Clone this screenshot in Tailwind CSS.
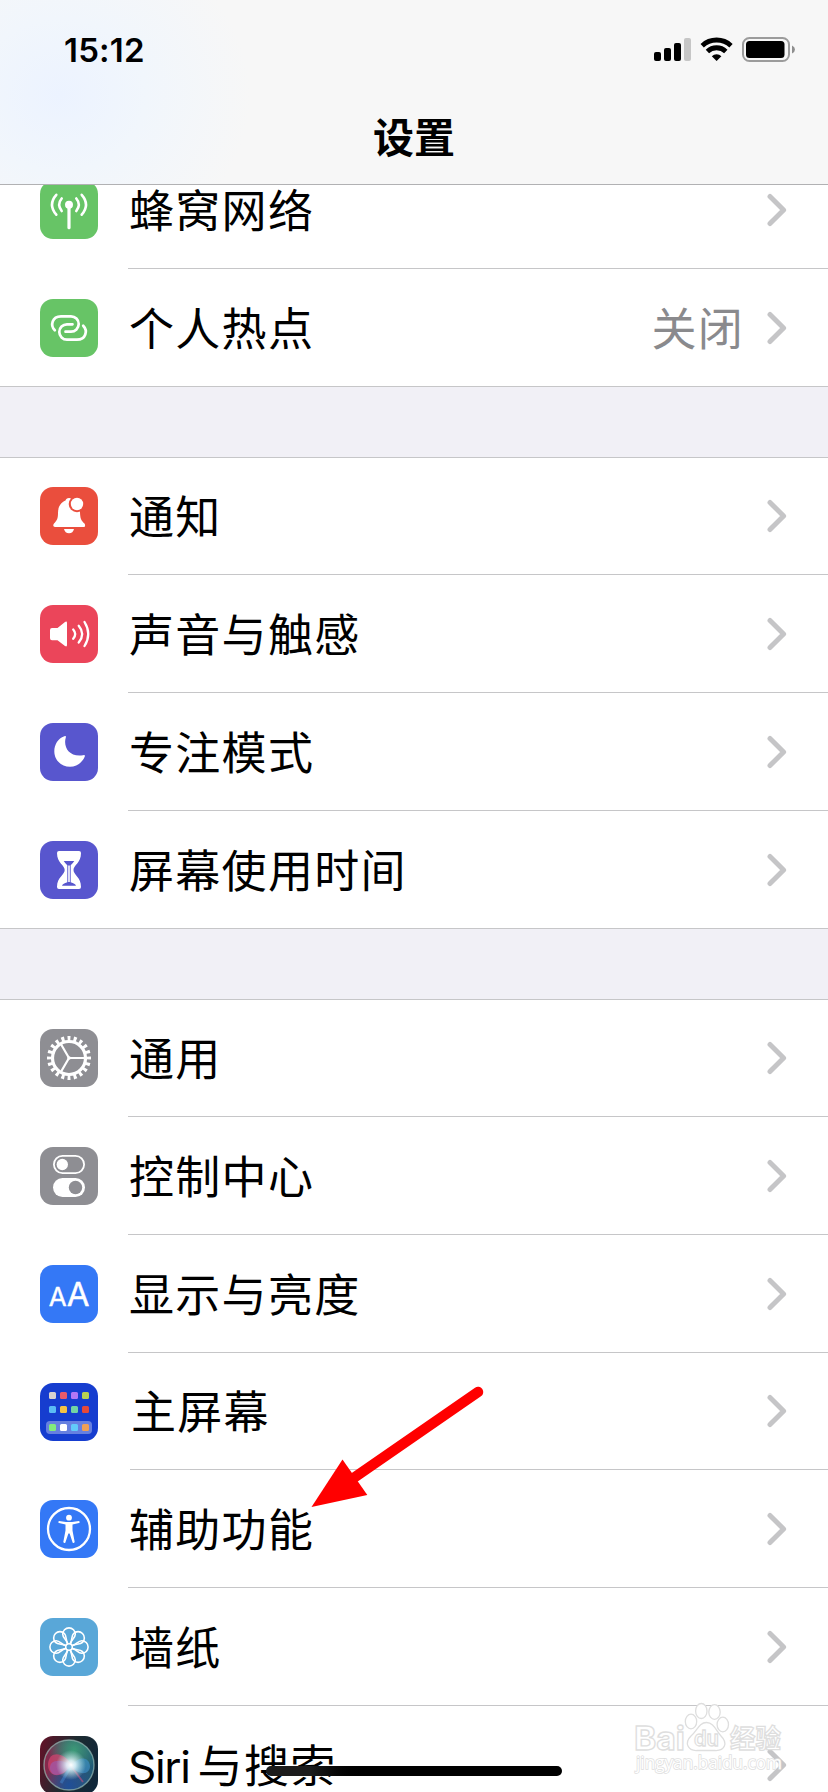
<!DOCTYPE html>
<html lang="zh-CN">
  <head>
    <meta charset="UTF-8" />
    <meta name="viewport" content="width=device-width, initial-scale=1.0" />
    <title>设置</title>
    <script src="https://cdn.jsdelivr.net/npm/@tailwindcss/browser@4"></script>
  </head>
<body class="bg-white">
  <svg class="hidden">
    <symbol id="chevron" viewBox="0 0 20 34">
      <path d="M3 3.5 L16.6 17 L3 30.5" fill="none" stroke="#c5c5c7" stroke-width="5" stroke-linecap="round" stroke-linejoin="round" />
    </symbol>
  </svg>

  <div class="relative w-[828px] h-[1792px] overflow-hidden bg-white text-black font-['Inter','Noto_Sans_CJK_SC',sans-serif]">

    <!-- header -->
    <header class="relative z-10 h-[185px] border-b border-[#b1b1b3] bg-[#f7f7f7] bg-[radial-gradient(ellipse_190px_170px_at_60px_95px,#ecf3ff_0%,#f1f6fc_45%,#f7f7f7_100%)]">
      <div class="flex justify-between items-center h-[100px] pl-[64px] pr-[32px]">
        <span class="pt-[1px] text-[33px] leading-none font-semibold tracking-[0.2px]">15:12</span>
        <svg class="w-[144px] h-[30px]" viewBox="651 35 144 30">
          <rect x="653" y="52" width="7" height="9" rx="2" />
          <rect x="663" y="48" width="7" height="13" rx="2" />
          <rect x="673" y="43" width="7" height="18" rx="2" />
          <rect x="683" y="38" width="7" height="23" rx="2" fill="#c6c6c6" />
          <g fill="none" stroke="#000" stroke-width="4.8">
            <path d="M701.2 45.7 A21 21 0 0 1 730 45.7" />
            <path d="M706.4 51.5 A13.2 13.2 0 0 1 724.8 51.5" />
          </g>
          <path d="M715.6 61 L710.8 56.2 A6.8 6.8 0 0 1 720.4 56.2 Z" />
          <rect x="742" y="38" width="46" height="23" rx="6.5" fill="none" stroke="#9c9c9c" stroke-width="2" />
          <rect x="745" y="41" width="38.500" height="17" rx="3.500" />
          <path d="M791 45.500 Q794 47 794 49.500 Q794 52 791 53.500 Z" fill="#8e8e8e" />
        </svg>
      </div>
      <h1 class="pt-[18px] text-center text-[41px] leading-[40px] font-bold">设置</h1>
    </header>

    <!-- settings list, scrolled under the header -->
    <main class="-mt-[34px] text-[45px] tracking-[1.3px]">
      <section class="border-b border-[#c6c6c8]">
        <div class="flex h-[118px] pt-[30px] pl-[40px]">
          <svg class="size-[58px] rounded-[13px] bg-[#67c466]" viewBox="0 0 58 58" fill="none" stroke="#fff" stroke-width="2.6" stroke-linecap="round">
            <circle cx="29" cy="23.700" r="4" fill="#fff" stroke="none" />
            <path d="M29 24 V46.700" stroke-width="3.200" />
            <path d="M21.700 17.500 Q16.700 23.500 21.700 30 M36.300 17.500 Q41.300 23.500 36.300 30 M16.300 13.800 Q7.700 23.500 16.300 33.700 M41.700 13.800 Q50.300 23.500 41.700 33.700" />
          </svg>
          <div class="flex flex-1 ml-[30px] -mt-[30px] pt-[30px] pr-[41px] border-b border-[#c6c6c8]">
            <span class="flex-1 pl-px leading-[62px]">蜂窝网络</span>
            <svg class="w-[20px] h-[34px] mt-[12px]"><use href="#chevron" /></svg>
          </div>
        </div>
        <div class="flex h-[117px] pt-[30px] pl-[40px]">
          <svg class="size-[58px] rounded-[13px] bg-[#67c466]" viewBox="0 0 58 58" fill="none" stroke="#fff" stroke-width="2.700" stroke-linecap="round">
            <path d="M14.800 31.300 C10 26.500 12 17.300 21 17.300 H31 A7.700 7.700 0 0 1 31 32.700 H25.500" />
            <path d="M43.200 26.700 C48 31.500 46 40.700 37 40.700 H27 A7.700 7.700 0 0 1 27 25.300 H32.500" />
          </svg>
          <div class="flex flex-1 ml-[30px] pr-[41px]">
            <span class="flex-1 pl-px leading-[62px]">个人热点</span>
            <span class="leading-[62px] mr-[23px] text-[#8a8a8d]">关闭</span>
            <svg class="w-[20px] h-[34px] mt-[12px]"><use href="#chevron" /></svg>
          </div>
        </div>
      </section>

      <div class="h-[70px] bg-[#f1f0f6]"></div>

      <section class="border-y border-[#c6c6c8]">
        <div class="flex h-[117px] pt-[29px] pl-[40px]">
          <svg class="size-[58px] rounded-[13px] bg-[#ea4e3d]" viewBox="0 0 58 58" fill="#fff">
            <path d="M29 11 C27 11 26 12 25.500 13.500 C20 16 18 20.500 18 26 C18 31.500 17 33.500 14 36.500 C12.500 38.500 13.500 40 15 40 H43.500 C45 40 45.700 38.500 44.500 36.500 C41 33.500 40.200 31.500 40 25 C40 18 34 11 29 11 Z" />
            <circle cx="37" cy="17" r="8.300" fill="#ea4e3d" />
            <circle cx="37" cy="17" r="6.200" />
            <path d="M24 42 H34 Q33 46.200 29 46.200 Q25 46.200 24 42 Z" />
          </svg>
          <div class="flex flex-1 ml-[30px] -mt-[29px] pt-[29px] pr-[41px] border-b border-[#c6c6c8]">
            <span class="flex-1 pl-px leading-[62px]">通知</span>
            <svg class="w-[20px] h-[34px] mt-[12px]"><use href="#chevron" /></svg>
          </div>
        </div>
        <div class="flex h-[118px] pt-[30px] pl-[40px]">
          <svg class="size-[58px] rounded-[13px] bg-[#eb455a]" viewBox="0 0 58 58" fill="none" stroke="#fff" stroke-width="2.300" stroke-linecap="round">
            <path d="M12 23 H17.500 L25 17 Q27 15.800 27 18 V40 Q27 42.200 25 41 L17.500 35.200 H12 Q10 35.200 10 33.200 V25 Q10 23 12 23 Z" fill="#fff" stroke="none" />
            <path d="M33.200 24.500 Q37.200 29 33.200 33.800 M38.700 20.800 Q45.700 29 38.700 37.500 M44.500 17 Q52 29 44.500 41" />
          </svg>
          <div class="flex flex-1 ml-[30px] -mt-[30px] pt-[30px] pr-[41px] border-b border-[#c6c6c8]">
            <span class="flex-1 pl-px leading-[62px]">声音与触感</span>
            <svg class="w-[20px] h-[34px] mt-[12px]"><use href="#chevron" /></svg>
          </div>
        </div>
        <div class="flex h-[118px] pt-[30px] pl-[40px]">
          <svg class="size-[58px] rounded-[13px] bg-[#5856ce]" viewBox="0 0 58 58" fill="#fff">
            <path d="M24.300 13.200 Q26.500 12.500 25.800 14.500 C23 24 29 34.500 43 32.300 Q45.500 31.500 44.700 33.800 C42 40 36.500 43.700 30 43.700 C21 43.700 14.300 37 14.300 28.300 C14.300 21.500 18 15.500 24.300 13.200 Z" />
          </svg>
          <div class="flex flex-1 ml-[30px] -mt-[30px] pt-[30px] pr-[41px] border-b border-[#c6c6c8]">
            <span class="flex-1 pl-px leading-[62px]">专注模式</span>
            <svg class="w-[20px] h-[34px] mt-[12px]"><use href="#chevron" /></svg>
          </div>
        </div>
        <div class="flex h-[117px] pt-[30px] pl-[40px]">
          <svg class="size-[58px] rounded-[13px] bg-[#5856ce]" viewBox="0 0 58 58">
            <path d="M19 10 H39 Q41 10 41 12 C41 22 33.500 24 33.500 29 C33.500 34 41 36 41 46 Q41 48 39 48 H19 Q17 48 17 46 C17 36 24.700 34 24.700 29 C24.700 24 17 22 17 12 Q17 10 19 10 Z" fill="#fff" />
            <path d="M23.700 20 H34.300 Q32.500 22.700 30.700 24.300 V41.300 Q35 42.500 36 44.700 H22 Q23 42.500 27.300 41.300 V24.300 Q25.500 22.700 23.700 20 Z" fill="#5856ce" />
            <path d="M29 24.500 V41" stroke="#fff" stroke-width="1.600" />
          </svg>
          <div class="flex flex-1 ml-[30px] pr-[41px]">
            <span class="flex-1 pl-px leading-[62px]">屏幕使用时间</span>
            <svg class="w-[20px] h-[34px] mt-[12px]"><use href="#chevron" /></svg>
          </div>
        </div>
      </section>

      <div class="h-[70px] bg-[#f1f0f6]"></div>

      <section class="border-t border-[#c6c6c8]">
        <div class="flex h-[117px] pt-[29px] pl-[40px]">
          <svg class="size-[58px] rounded-[13px] bg-[#8e8e93]" viewBox="0 0 58 58" fill="none" stroke="#fff">
            <circle cx="29" cy="29" r="19.500" stroke-width="5" pathLength="40" stroke-dasharray="0.950 1.050" stroke-dashoffset="0.475" />
            <circle cx="29" cy="29" r="16.500" stroke-width="3.200" />
            <path d="M29 29 H45 M29 29 L21 15.200 M29 29 L21 42.800" stroke-width="2.200" />
            <circle cx="29" cy="29" r="1.800" fill="#fff" stroke="none" />
          </svg>
          <div class="flex flex-1 ml-[30px] -mt-[29px] pt-[29px] pr-[41px] border-b border-[#c6c6c8]">
            <span class="flex-1 pl-px leading-[62px]">通用</span>
            <svg class="w-[20px] h-[34px] mt-[12px]"><use href="#chevron" /></svg>
          </div>
        </div>
        <div class="flex h-[118px] pt-[30px] pl-[40px]">
          <svg class="size-[58px] rounded-[13px] bg-[#8e8e93]" viewBox="0 0 58 58" fill="#fff">
            <rect x="13.900" y="8.900" width="30.200" height="17.200" rx="8.600" fill="none" stroke="#fff" stroke-width="1.800" />
            <circle cx="22.300" cy="17.500" r="5.700" />
            <rect x="13" y="31" width="32" height="19" rx="9.500" />
            <circle cx="35.500" cy="40.500" r="6.700" fill="#8e8e93" />
          </svg>
          <div class="flex flex-1 ml-[30px] -mt-[30px] pt-[30px] pr-[41px] border-b border-[#c6c6c8]">
            <span class="flex-1 pl-px leading-[62px]">控制中心</span>
            <svg class="w-[20px] h-[34px] mt-[12px]"><use href="#chevron" /></svg>
          </div>
        </div>
        <div class="flex h-[118px] pt-[30px] pl-[40px]">
          <svg class="size-[58px] rounded-[13px] bg-[#3478f6] tracking-normal" viewBox="0 0 58 58" fill="#fff" stroke="#fff" stroke-width="0.400" stroke-linejoin="round" text-anchor="middle">
            <text x="17.700" y="41" font-size="26">A</text>
            <text x="38.200" y="41" font-size="33">A</text>
          </svg>
          <div class="flex flex-1 ml-[30px] -mt-[30px] pt-[30px] pr-[41px] border-b border-[#c6c6c8]">
            <span class="flex-1 pl-px leading-[62px]">显示与亮度</span>
            <svg class="w-[20px] h-[34px] mt-[12px]"><use href="#chevron" /></svg>
          </div>
        </div>
        <div class="flex h-[117px] pt-[30px] pl-[40px]">
          <svg class="size-[58px] rounded-[13px] bg-[#163dcf]" viewBox="0 0 58 58">
            <rect x="6" y="38" width="46" height="13" rx="4" fill="#fff" fill-opacity="0.350" />
            <rect x="9" y="9" width="7" height="7" rx="1.500" fill="#d9d4cf" />
            <rect x="20" y="9" width="7" height="7" rx="1.500" fill="#ea5b6b" />
            <rect x="31" y="9" width="7" height="7" rx="1.500" fill="#b277f5" />
            <rect x="42" y="9" width="7" height="7" rx="1.500" fill="#b9d151" />
            <rect x="9" y="23" width="7" height="7" rx="1.500" fill="#5bbcf5" />
            <rect x="20" y="23" width="7" height="7" rx="1.500" fill="#f5c344" />
            <rect x="31" y="23" width="7" height="7" rx="1.500" fill="#72d5a3" />
            <rect x="42" y="23" width="7" height="7" rx="1.500" fill="#e6493a" />
            <rect x="9" y="41" width="7" height="7" rx="1.500" fill="#83ec7d" />
            <rect x="20" y="41" width="7" height="7" rx="1.500" fill="#fff" />
            <rect x="31" y="41" width="7" height="7" rx="1.500" fill="#62cbfa" />
            <rect x="42" y="41" width="7" height="7" rx="1.500" fill="#f0a055" />
          </svg>
          <div class="flex flex-1 ml-[32px] -mt-[30px] pt-[30px] pr-[41px] border-b border-[#c6c6c8]">
            <span class="flex-1 pl-px leading-[60px]">主屏幕</span>
            <svg class="w-[20px] h-[34px] mt-[11px]"><use href="#chevron" /></svg>
          </div>
        </div>
        <div class="flex h-[118px] pt-[30px] pl-[40px]">
          <svg class="size-[58px] rounded-[13px] bg-[#3478f6]" viewBox="0 0 58 58" fill="#fff">
            <circle cx="29" cy="29" r="21" fill="none" stroke="#fff" stroke-width="2.300" />
            <circle cx="29" cy="17.700" r="2.900" />
            <path d="M19 21 L26 22 H32 L39 21 Q40.300 22.200 39 23.100 L32.500 24.500 V30.500 L34.700 42 Q34 43.300 32.700 42.700 L29.600 33.500 H28.400 L25.300 42.700 Q24 43.300 23.300 42 L25.500 30.500 V24.500 L19 23.100 Q17.700 22.200 19 21 Z" />
          </svg>
          <div class="flex flex-1 ml-[30px] -mt-[30px] pt-[30px] pr-[41px] border-b border-[#c6c6c8]">
            <span class="flex-1 pl-px leading-[62px]">辅助功能</span>
            <svg class="w-[20px] h-[34px] mt-[12px]"><use href="#chevron" /></svg>
          </div>
        </div>
        <div class="flex h-[118px] pt-[30px] pl-[40px]">
          <svg class="size-[58px] rounded-[13px] bg-[#59a7d8]" viewBox="0 0 58 58" fill="none" stroke="#fff" stroke-width="1.600">
            <defs>
              <path id="petal" d="M27.800 26 C27 22 22.700 20 22.700 16.200 A6.300 6.300 0 0 1 35.300 16.200 C35.300 20 31 22 30.200 26" />
            </defs>
            <use href="#petal" />
            <use href="#petal" transform="rotate(45 29 29)" />
            <use href="#petal" transform="rotate(90 29 29)" />
            <use href="#petal" transform="rotate(135 29 29)" />
            <use href="#petal" transform="rotate(180 29 29)" />
            <use href="#petal" transform="rotate(225 29 29)" />
            <use href="#petal" transform="rotate(270 29 29)" />
            <use href="#petal" transform="rotate(315 29 29)" />
            <circle cx="29" cy="29" r="3.300" />
          </svg>
          <div class="flex flex-1 ml-[30px] -mt-[30px] pt-[30px] pr-[41px] border-b border-[#c6c6c8]">
            <span class="flex-1 pl-px leading-[62px]">墙纸</span>
            <svg class="w-[20px] h-[34px] mt-[12px]"><use href="#chevron" /></svg>
          </div>
        </div>
        <div class="flex h-[118px] pt-[30px] pl-[40px]">
          <svg class="size-[58px] rounded-[13px]" viewBox="0 0 58 58">
            <defs>
              <linearGradient id="siriBg" x1="0" y1="0.300" x2="1" y2="0.600">
                <stop offset="0" stop-color="#5c1428" />
                <stop offset="0.500" stop-color="#1d2b30" />
                <stop offset="1" stop-color="#10273a" />
              </linearGradient>
              <linearGradient id="siriOrb" x1="0" y1="0.500" x2="1" y2="0.500">
                <stop offset="0" stop-color="#8e2448" />
                <stop offset="0.480" stop-color="#3f5266" />
                <stop offset="1" stop-color="#1d5a78" />
              </linearGradient>
              <radialGradient id="siriGreen" cx="0.600" cy="0.200" r="0.500">
                <stop offset="0" stop-color="#3c9a78" />
                <stop offset="1" stop-color="#3c9a78" stop-opacity="0" />
              </radialGradient>
              <radialGradient id="siriBlue" cx="0.500" cy="0.900" r="0.500">
                <stop offset="0" stop-color="#1f4f98" />
                <stop offset="1" stop-color="#1f4f98" stop-opacity="0" />
              </radialGradient>
              <radialGradient id="siriGlow">
                <stop offset="0" stop-color="#fff" />
                <stop offset="0.300" stop-color="#e8fbff" stop-opacity="0.850" />
                <stop offset="1" stop-color="#bfeee8" stop-opacity="0" />
              </radialGradient>
            </defs>
            <rect width="58" height="58" fill="url(#siriBg)" />
            <circle cx="29" cy="29" r="25" fill="url(#siriOrb)" />
            <circle cx="29" cy="29" r="25" fill="url(#siriGreen)" />
            <circle cx="29" cy="29" r="25" fill="url(#siriBlue)" />
            <path d="M31 28 C24 16 9 14 8 28 C8 43 24 43 31 28 Z" fill="#d9416f" fill-opacity="0.700" />
            <path d="M31 29 C20 22 9 24 10 33 C12 43 25 39 31 29 Z" fill="#9a5db5" fill-opacity="0.600" />
            <path d="M31 30 C38 20 49 20 50 30 C50 39 39 40 31 30 Z" fill="#3d93cf" fill-opacity="0.600" />
            <path d="M31 30 L43 46" stroke="#c05080" stroke-opacity="0.600" stroke-width="1.800" />
            <path d="M31 30 L21 47" stroke="#3f86d0" stroke-opacity="0.500" stroke-width="3" />
            <circle cx="31" cy="29" r="15" fill="url(#siriGlow)" />
            <circle cx="29" cy="29" r="25" fill="none" stroke="#9ec3bd" stroke-opacity="0.650" stroke-width="1.400" />
          </svg>
          <div class="flex flex-1 ml-[30px] pr-[41px]">
            <span class="flex-1 leading-[62px]"><span class="text-[44px] tracking-[-1.300px]">Siri</span><span class="ml-[8px]">与搜索</span></span>
            <svg class="w-[20px] h-[34px] mt-[12px]"><use href="#chevron" /></svg>
          </div>
        </div>
      </section>
    </main>

    <!-- red pointer -->
    <svg class="absolute left-[300px] top-[1375px] w-[200px] h-[145px]" viewBox="300 1375 200 145">
      <path d="M478 1392 L350 1480.500" stroke="#f00" stroke-width="10.500" stroke-linecap="round" />
      <path d="M311.500 1507 L342.500 1459.500 L367.300 1495 Z" fill="#f00" />
    </svg>

    <!-- watermark -->
    <svg class="absolute left-[630px] top-[1700px] w-[160px] h-[80px]" viewBox="630 1700 160 80" fill="#fff" stroke="#dedede" stroke-width="1.300">
      <ellipse cx="691" cy="1721.500" rx="5.700" ry="7.300" />
      <ellipse cx="701.300" cy="1711" rx="5.700" ry="7.500" />
      <ellipse cx="714.500" cy="1712" rx="5.700" ry="7.300" />
      <ellipse cx="722.800" cy="1724.500" rx="5.700" ry="7.300" />
      <path d="M706.500 1722.500 C699 1722.500 697 1731 691 1736 C684 1743 688 1751 697 1750.500 H715 C725 1751 728 1743 721 1736 C716 1731 714 1722.500 706.500 1722.500 Z" />
      <text x="634" y="1749.500" font-size="33" font-weight="700" textLength="51" lengthAdjust="spacingAndGlyphs">Bai</text>
      <text x="694" y="1746" font-size="22" font-weight="600" textLength="25" lengthAdjust="spacingAndGlyphs">du</text>
      <text x="730" y="1748" font-size="26" font-weight="700" textLength="51" lengthAdjust="spacingAndGlyphs">经验</text>
      <text x="636" y="1769" font-size="18.500" textLength="146" stroke-width="1.600" paint-order="stroke" lengthAdjust="spacingAndGlyphs" class="font-['Open_Sans',sans-serif]">jingyan.baidu.com</text>
    </svg>

    <!-- home indicator -->
    <div class="absolute left-[266px] top-[1766px] w-[296px] h-[10px] rounded-full bg-linear-to-r from-[#1c1c1c] from-15% to-black to-35%"></div>
  </div>
</body>
</html>
